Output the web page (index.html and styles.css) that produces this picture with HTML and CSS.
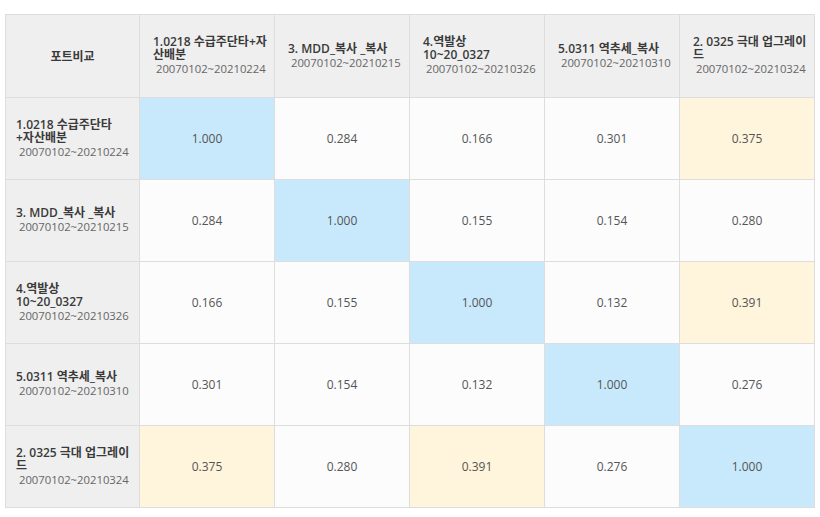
FILE: index.html
```html
<!DOCTYPE html>
<html lang="ko">
<head>
<meta charset="utf-8">
<link rel="stylesheet" href="styles.css">
</head>
<body>
<table class="corr">
  <colgroup>
    <col class="c-first"><col class="c"><col class="c"><col class="c"><col class="c"><col class="c">
  </colgroup>
  <thead>
    <tr class="head-row">
      <th class="corner">포트비교</th>
      <th class="colh"><span class="name">1.0218 수급주단타+자<br>산배분</span><span class="date">&nbsp;20070102~20210224</span></th>
      <th class="colh"><span class="name">3. MDD_복사 _복사</span><span class="date">&nbsp;20070102~20210215</span></th>
      <th class="colh"><span class="name">4.역발상<br>10~20_0327</span><span class="date">&nbsp;20070102~20210326</span></th>
      <th class="colh"><span class="name">5.0311 역추세_복사</span><span class="date">&nbsp;20070102~20210310</span></th>
      <th class="colh"><span class="name">2. 0325 극대 업그레이<br>드</span><span class="date">&nbsp;20070102~20210324</span></th>
    </tr>
  </thead>
  <tbody>
    <tr class="row">
      <th class="rowh"><span class="name">1.0218 수급주단타<br>+자산배분</span><span class="date">&nbsp;20070102~20210224</span></th>
      <td class="v self">1.000</td>
      <td class="v">0.284</td>
      <td class="v">0.166</td>
      <td class="v">0.301</td>
      <td class="v hi">0.375</td>
    </tr>
    <tr class="row">
      <th class="rowh"><span class="name">3. MDD_복사 _복사</span><span class="date">&nbsp;20070102~20210215</span></th>
      <td class="v">0.284</td>
      <td class="v self">1.000</td>
      <td class="v">0.155</td>
      <td class="v">0.154</td>
      <td class="v">0.280</td>
    </tr>
    <tr class="row">
      <th class="rowh"><span class="name">4.역발상<br>10~20_0327</span><span class="date">&nbsp;20070102~20210326</span></th>
      <td class="v">0.166</td>
      <td class="v">0.155</td>
      <td class="v self">1.000</td>
      <td class="v">0.132</td>
      <td class="v hi">0.391</td>
    </tr>
    <tr class="row">
      <th class="rowh"><span class="name">5.0311 역추세_복사</span><span class="date">&nbsp;20070102~20210310</span></th>
      <td class="v">0.301</td>
      <td class="v">0.154</td>
      <td class="v">0.132</td>
      <td class="v self">1.000</td>
      <td class="v">0.276</td>
    </tr>
    <tr class="row">
      <th class="rowh"><span class="name">2. 0325 극대 업그레이<br>드</span><span class="date">&nbsp;20070102~20210324</span></th>
      <td class="v hi">0.375</td>
      <td class="v">0.280</td>
      <td class="v hi">0.391</td>
      <td class="v">0.276</td>
      <td class="v self">1.000</td>
    </tr>
  </tbody>
</table>
</body>
</html>
```

FILE: styles.css
```css
html, body {
  margin: 0;
  padding: 0;
  background: #ffffff;
}

body {
  padding: 14px 0 0 5px;
  font-family: "Open Sans", "Noto Sans CJK KR", sans-serif;
  font-size: 12px;
  color: #333;
}

.corr {
  border-collapse: collapse;
  table-layout: fixed;
  width: 810px;
}

.c-first { width: 134px; }
.c { width: 135px; }

.corr th,
.corr td {
  border: 1px solid #dddddd;
  vertical-align: middle;
}

.head-row { height: 83px; }
.row { height: 82px; }

.corner {
  background: #efefef;
  text-align: center;
  font-weight: 600;
  font-size: 12px;
  color: #3a3a3a;
}

.colh {
  background: #efefef;
  text-align: left;
  padding: 0 8px 0 13px;
  font-weight: normal;
}

.rowh {
  background: #efefef;
  text-align: left;
  padding: 0 8px 0 10px;
  font-weight: normal;
}

.name {
  display: block;
  font-weight: 600;
  font-size: 12px;
  line-height: 13px;
  color: #3a3a3a;
  white-space: nowrap;
}

.date {
  display: block;
  font-size: 11.3px;
  line-height: 16px;
  color: #666;
  white-space: nowrap;
}

.v {
  background: #fcfcfc;
  text-align: center;
  color: #555;
  font-size: 12px;
}

.v.self { background: #c8e9fc; }
.v.hi { background: #fff4dc; }
```
